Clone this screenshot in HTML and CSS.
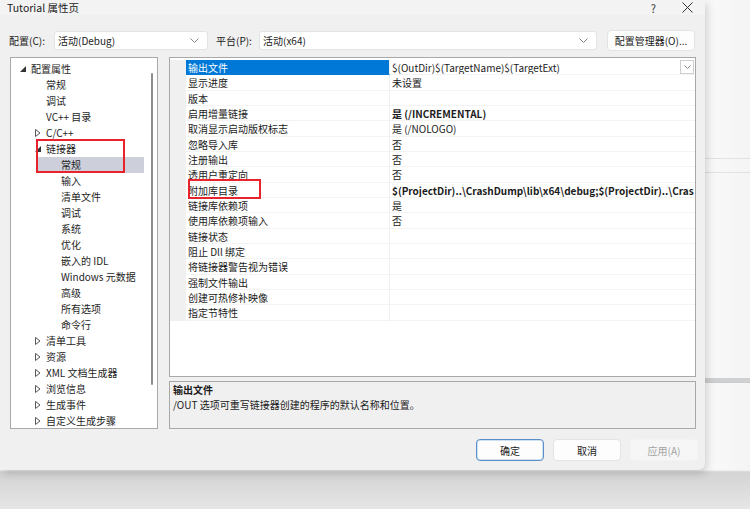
FILE: index.html
```html
<!DOCTYPE html>
<html lang="zh">
<head>
<meta charset="utf-8">
<title>Tutorial 属性页</title>
<link rel="stylesheet" href="styles.css">
</head>
<body>
<div class="backdrop">
  <div class="bg-line l1"></div>
  <div class="bg-line l2"></div>
  <div class="bg-band"></div>
</div>
<div class="dialog">
  <div class="titlebar">
    <span class="title">Tutorial 属性页</span>
    <span class="tb-actions">
      <span class="help">?</span>
      <svg class="close" width="11" height="11" viewBox="0 0 11 11"><path d="M0.5 0.5 L10.5 10.5 M10.5 0.5 L0.5 10.5" stroke="#333" stroke-width="1"/></svg>
    </span>
  </div>

  <div class="toolbar">
    <span class="lbl lbl-config">配置(C):</span>
    <div class="combo combo-config"><span>活动(Debug)</span><svg class="chev" width="9" height="5" viewBox="0 0 9 5"><path d="M0.5 0.5 L4.5 4.5 L8.5 0.5" fill="none" stroke="#888" stroke-width="1"/></svg></div>
    <span class="lbl lbl-platform">平台(P):</span>
    <div class="combo combo-platform"><span>活动(x64)</span><svg class="chev" width="9" height="5" viewBox="0 0 9 5"><path d="M0.5 0.5 L4.5 4.5 L8.5 0.5" fill="none" stroke="#888" stroke-width="1"/></svg></div>
    <button class="btn btn-manager">配置管理器(O)...</button>
  </div>

  <div class="main">
    <div class="tree">
      <div class="tree-row lv0"><span class="arr"><svg width="6" height="6" viewBox="0 0 6 6"><path d="M6 0 L6 6 L0 6 Z" fill="#333"/></svg></span>配置属性</div>
      <div class="tree-row lv1"><span class="arr"></span>常规</div>
      <div class="tree-row lv1"><span class="arr"></span>调试</div>
      <div class="tree-row lv1"><span class="arr"></span>VC++ 目录</div>
      <div class="tree-row lv1"><span class="arr"><svg width="6" height="8" viewBox="0 0 6 8"><path d="M0.5 0.5 L5 4 L0.5 7.5 Z" fill="none" stroke="#555" stroke-width="1"/></svg></span>C/C++</div>
      <div class="tree-row lv1"><span class="arr"><svg width="6" height="6" viewBox="0 0 6 6"><path d="M6 0 L6 6 L0 6 Z" fill="#333"/></svg></span>链接器</div>
      <div class="tree-row lv2 selected"><span class="arr"></span>常规</div>
      <div class="tree-row lv2"><span class="arr"></span>输入</div>
      <div class="tree-row lv2"><span class="arr"></span>清单文件</div>
      <div class="tree-row lv2"><span class="arr"></span>调试</div>
      <div class="tree-row lv2"><span class="arr"></span>系统</div>
      <div class="tree-row lv2"><span class="arr"></span>优化</div>
      <div class="tree-row lv2"><span class="arr"></span>嵌入的 IDL</div>
      <div class="tree-row lv2"><span class="arr"></span>Windows 元数据</div>
      <div class="tree-row lv2"><span class="arr"></span>高级</div>
      <div class="tree-row lv2"><span class="arr"></span>所有选项</div>
      <div class="tree-row lv2"><span class="arr"></span>命令行</div>
      <div class="tree-row lv1"><span class="arr"><svg width="6" height="8" viewBox="0 0 6 8"><path d="M0.5 0.5 L5 4 L0.5 7.5 Z" fill="none" stroke="#555" stroke-width="1"/></svg></span>清单工具</div>
      <div class="tree-row lv1"><span class="arr"><svg width="6" height="8" viewBox="0 0 6 8"><path d="M0.5 0.5 L5 4 L0.5 7.5 Z" fill="none" stroke="#555" stroke-width="1"/></svg></span>资源</div>
      <div class="tree-row lv1"><span class="arr"><svg width="6" height="8" viewBox="0 0 6 8"><path d="M0.5 0.5 L5 4 L0.5 7.5 Z" fill="none" stroke="#555" stroke-width="1"/></svg></span>XML 文档生成器</div>
      <div class="tree-row lv1"><span class="arr"><svg width="6" height="8" viewBox="0 0 6 8"><path d="M0.5 0.5 L5 4 L0.5 7.5 Z" fill="none" stroke="#555" stroke-width="1"/></svg></span>浏览信息</div>
      <div class="tree-row lv1"><span class="arr"><svg width="6" height="8" viewBox="0 0 6 8"><path d="M0.5 0.5 L5 4 L0.5 7.5 Z" fill="none" stroke="#555" stroke-width="1"/></svg></span>生成事件</div>
      <div class="tree-row lv1"><span class="arr"><svg width="6" height="8" viewBox="0 0 6 8"><path d="M0.5 0.5 L5 4 L0.5 7.5 Z" fill="none" stroke="#555" stroke-width="1"/></svg></span>自定义生成步骤</div>
      <div class="scrollbar"></div>
      <div class="redbox redbox-tree"></div>
    </div>

    <div class="right">
      <div class="grid">
        <div class="prow selected"><span class="pm"></span><span class="pn">输出文件</span><span class="pv">$(OutDir)$(TargetName)$(TargetExt)<span class="dd"><svg width="7" height="4" viewBox="0 0 7 4"><path d="M0.5 0.5 L3.5 3.5 L6.5 0.5" fill="none" stroke="#888" stroke-width="1"/></svg></span></span></div>
        <div class="prow"><span class="pm"></span><span class="pn">显示进度</span><span class="pv">未设置</span></div>
        <div class="prow"><span class="pm"></span><span class="pn">版本</span><span class="pv"></span></div>
        <div class="prow"><span class="pm"></span><span class="pn">启用增量链接</span><span class="pv bold">是 (/INCREMENTAL)</span></div>
        <div class="prow"><span class="pm"></span><span class="pn">取消显示启动版权标志</span><span class="pv">是 (/NOLOGO)</span></div>
        <div class="prow"><span class="pm"></span><span class="pn">忽略导入库</span><span class="pv">否</span></div>
        <div class="prow"><span class="pm"></span><span class="pn">注册输出</span><span class="pv">否</span></div>
        <div class="prow"><span class="pm"></span><span class="pn">透用户重定向</span><span class="pv">否</span></div>
        <div class="prow"><span class="pm"></span><span class="pn">附加库目录</span><span class="pv bold">$(ProjectDir)..\CrashDump\lib\x64\debug;$(ProjectDir)..\Cras</span></div>
        <div class="prow"><span class="pm"></span><span class="pn">链接库依赖项</span><span class="pv">是</span></div>
        <div class="prow"><span class="pm"></span><span class="pn">使用库依赖项输入</span><span class="pv">否</span></div>
        <div class="prow"><span class="pm"></span><span class="pn">链接状态</span><span class="pv"></span></div>
        <div class="prow"><span class="pm"></span><span class="pn">阻止 Dll 绑定</span><span class="pv"></span></div>
        <div class="prow"><span class="pm"></span><span class="pn">将链接器警告视为错误</span><span class="pv"></span></div>
        <div class="prow"><span class="pm"></span><span class="pn">强制文件输出</span><span class="pv"></span></div>
        <div class="prow"><span class="pm"></span><span class="pn">创建可热修补映像</span><span class="pv"></span></div>
        <div class="prow"><span class="pm"></span><span class="pn">指定节特性</span><span class="pv"></span></div>
        <div class="redbox redbox-grid"></div>
      </div>
      <div class="desc">
        <div class="desc-title">输出文件</div>
        <div class="desc-text">/OUT 选项可重写链接器创建的程序的默认名称和位置。</div>
      </div>
    </div>
  </div>

  <div class="buttons">
    <button class="btn btn-ok">确定</button>
    <button class="btn btn-cancel">取消</button>
    <button class="btn btn-apply">应用(A)</button>
  </div>
</div>
</body>
</html>
```

FILE: styles.css
```css
* { box-sizing: border-box; }
html, body {
  margin: 0;
  padding: 0;
  width: 750px;
  height: 509px;
  overflow: hidden;
}
body {
  position: relative;
  font-family: "Noto Sans CJK SC", "Noto Sans", sans-serif;
  font-size: 10px;
  color: #1b1b1b;
  background: linear-gradient(to bottom, #f7f7f7 0, #f5f5f5 470px, #d4d4d4 472px, #dcdcdc 490px, #e6e6e6 509px);
}
.backdrop {
  position: absolute;
  left: 705px;
  top: 0;
  width: 45px;
  height: 470px;
  background: linear-gradient(to right, #fafafa, #f4f4f4);
}
.bg-line {
  position: absolute;
  left: 0;
  right: 0;
  height: 1px;
  background: #e2e2e2;
}
.bg-line.l1 { top: 158px; }
.bg-line.l2 { top: 172px; }
.bg-band {
  position: absolute;
  left: 0;
  right: 0;
  top: 378px;
  height: 5px;
  background: #cfd0d2;
  border-bottom: 1px dotted #c8c8c8;
}
.dialog {
  position: relative;
  width: 705px;
  height: 470px;
  background: #f0f0f0;
  border-bottom-right-radius: 7px;
  box-shadow: 2px 3px 10px rgba(0, 0, 0, 0.18);
  display: flex;
  flex-direction: column;
}
.titlebar {
  height: 15px;
  display: flex;
  align-items: center;
  justify-content: space-between;
  padding: 0 12px 0 7px;
  background: #f3f3f3;
  font-size: 10.5px;
  color: #222;
}
.tb-actions {
  display: flex;
  align-items: center;
  gap: 26px;
}
.help { font-size: 11px; color: #333; }
.toolbar {
  display: flex;
  align-items: center;
  height: 20px;
  margin-top: 15px;
  padding-left: 9px;
}
.lbl { color: #1b1b1b; }
.lbl-config { width: 45px; }
.lbl-platform { width: 43px; margin-left: 8px; }
.combo {
  height: 19px;
  background: #ffffff;
  border: 1px solid #e3e3e3;
  border-radius: 3px;
  display: flex;
  align-items: center;
  justify-content: space-between;
  padding: 0 8px 0 3px;
}
.combo-config { width: 154px; }
.combo-platform { width: 338px; }
.btn {
  font-family: "Noto Sans CJK SC", "Noto Sans", sans-serif;
  font-size: 10px;
  color: #1b1b1b;
  background: #fdfdfd;
  border: 1px solid #e3e3e3;
  border-radius: 4px;
  padding: 0;
  height: 21px;
}
.btn-manager {
  width: 88px;
  margin-left: 10px;
  height: 21px;
}
.main {
  display: flex;
  margin-top: 7px;
  padding-left: 10px;
  gap: 11px;
  height: 372px;
}
.tree {
  position: relative;
  width: 148px;
  height: 372px;
  background: #ffffff;
  border: 1px solid #a8a8a8;
  padding-top: 3px;
  overflow: hidden;
}
.tree-row {
  height: 16px;
  line-height: 16px;
  display: flex;
  align-items: center;
  white-space: nowrap;
  color: #1e1e1e;
}
.tree-row .arr {
  width: 15px;
  flex: none;
  display: flex;
  align-items: center;
  padding-left: 4px;
}
.tree-row.lv0 { padding-left: 5px; }
.tree-row.lv1 { padding-left: 20px; }
.tree-row.lv2 { padding-left: 35px; }
.tree-row.selected {
  background: linear-gradient(to right, transparent 25px, #cdcfdb 25px, #cdcfdb 133px, transparent 133px);
}
.scrollbar {
  position: absolute;
  left: 140px;
  top: 15px;
  width: 2px;
  height: 312px;
  background: #8d8d8d;
  border-radius: 1px;
}
.redbox {
  position: absolute;
  border: 2px solid #e8232b;
}
.redbox-tree {
  left: 25px;
  top: 81px;
  width: 89px;
  height: 34px;
}
.right {
  width: 527px;
  display: flex;
  flex-direction: column;
  gap: 4px;
}
.grid {
  position: relative;
  height: 320px;
  background: #ffffff;
  border: 1px solid #a8a8a8;
  padding-top: 2px;
  overflow: hidden;
}
.prow {
  display: flex;
  height: 15.33px;
  line-height: 15px;
  white-space: nowrap;
}
.pm {
  width: 16px;
  flex: none;
  background: #f0f0f0;
}
.pn {
  width: 204px;
  flex: none;
  padding-left: 2px;
  border-right: 1px solid #f0f0f0;
  border-bottom: 1px solid #f3f3f3;
  overflow: hidden;
}
.pv {
  position: relative;
  flex: 1;
  padding-left: 2px;
  overflow: hidden;
  border-bottom: 1px solid #f3f3f3;
}
.prow.selected .pn {
  background: #0078d7;
  color: #ffffff;
  border-bottom-color: #0078d7;
}
.bold { font-weight: 700; }
.dd {
  position: absolute;
  right: 1px;
  top: 0;
  width: 14px;
  height: 14px;
  border: 1px solid #cfcfcf;
  background: #fff;
  display: flex;
  align-items: center;
  justify-content: center;
}
.redbox-grid {
  left: 18px;
  top: 121px;
  width: 73px;
  height: 20px;
}
.desc {
  height: 48px;
  border: 1px solid #a8a8a8;
  background: #f0f0f0;
  padding: 0 3px;
  line-height: 15px;
}
.desc-title { font-weight: 700; }
.buttons {
  display: flex;
  justify-content: flex-end;
  gap: 9px;
  margin-top: 10px;
  padding-right: 7px;
}
.buttons .btn {
  width: 68px;
  height: 22px;
}
.btn-ok {
  border: 1px solid #5a8fc8;
  box-shadow: inset 0 0 0 1px #cfe0f3;
}
.btn-apply {
  background: #f6f6f6;
  border-color: #f3f3f3;
  color: #a3a3a3;
}
```
